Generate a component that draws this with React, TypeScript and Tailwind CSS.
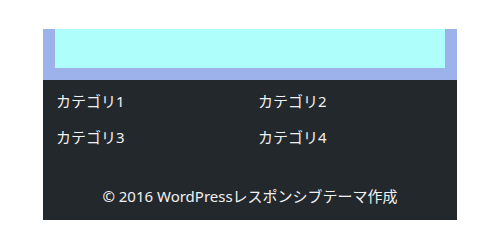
export default function App() {
  const cats = ["カテゴリ1", "カテゴリ2", "カテゴリ3", "カテゴリ4"];

  return (
    <div
      className="w-[500px] h-[250px] bg-white pt-[29px]"
      style={{ fontFamily: '"Noto Sans", "Noto Sans CJK JP", sans-serif' }}
    >
      <div className="mx-auto w-[414px]">
        <div className="bg-[#9db2ea] px-3 pb-3">
          <div className="h-[39px] bg-[#aefefc]" />
        </div>
        <footer className="bg-[#23282d] text-[#f1f1f1] h-[140px] flex flex-col">
          <ul className="grid grid-cols-[202px_1fr] pl-[13px] pt-[10px] text-[15px] leading-[22px] gap-y-[14px]">
            {cats.map((c) => (
              <li key={c}>{c}</li>
            ))}
          </ul>
          <p className="mt-auto mb-[13px] text-center text-[15px] leading-[22px]">
            © 2016 WordPressレスポンシブテーマ作成
          </p>
        </footer>
      </div>
    </div>
  );
}
